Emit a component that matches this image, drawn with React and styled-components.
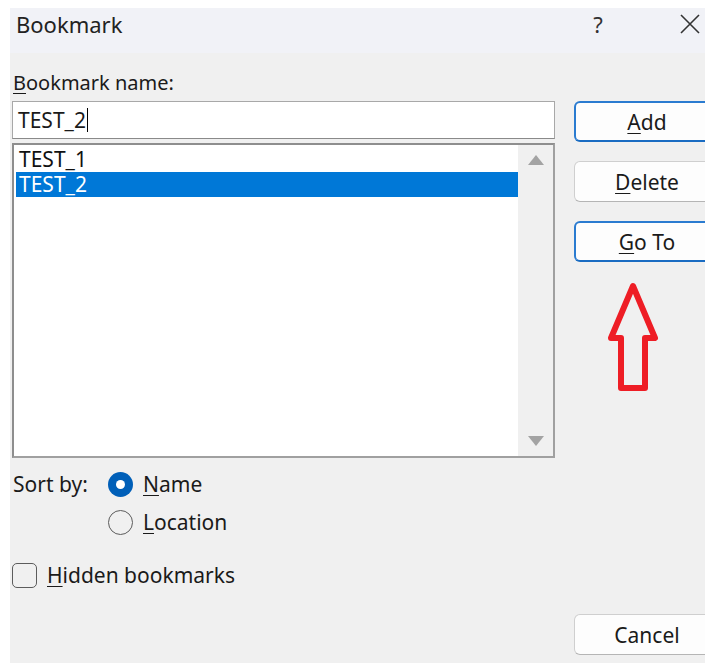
import styled, { createGlobalStyle } from "styled-components";

const GlobalStyle = createGlobalStyle`
  html, body {
    margin: 0;
    padding: 0;
    background: #ffffff;
    overflow: hidden;
  }
  body {
    font-family: "Noto Sans", "Open Sans", sans-serif;
    color: #1a1a1a;
  }
`;

const Dialog = styled.div`
  margin: 8px 0 0 10px;
  width: 695px;
  height: 655px;
  background: #f0f0f0;
  overflow: hidden;
  display: flex;
  flex-direction: column;
`;

const TitleBar = styled.div`
  height: 45px;
  flex-shrink: 0;
  background: #f1f2f7;
  display: flex;
  align-items: center;
  padding-left: 6px;
  font-size: 22px;
  color: #222;
`;

const Title = styled.div`
  flex: 1;
  margin-top: -14px;
`;

const TitleButton = styled.div`
  width: 24px;
  display: flex;
  justify-content: center;
  margin: -14px ${(p) => p.mr}px 0 0;
  color: #333;
  font-size: 22px;
`;

const Body = styled.div`
  flex: 1;
  display: flex;
  gap: 19px;
  padding: 0 0 0 2px;
`;

const LeftColumn = styled.div`
  width: 543px;
  flex-shrink: 0;
  display: flex;
  flex-direction: column;
`;

const RightColumn = styled.div`
  width: 146px;
  flex-shrink: 0;
  display: flex;
  flex-direction: column;
  padding: 48px 0 8px;
`;

const Label = styled.div`
  font-size: 20px;
  line-height: 24px;
  padding: 18px 0 0 1px;
  height: 48px;
  box-sizing: border-box;
`;

const Key = styled.span`
  text-decoration: underline;
  text-underline-offset: 3px;
  text-decoration-thickness: 1px;
`;

const NameInput = styled.div`
  height: 38px;
  box-sizing: border-box;
  background: #fff;
  border: 1px solid #a8a8a8;
  border-bottom-color: #8a8a8a;
  display: flex;
  align-items: center;
  padding-left: 5px;
  font-size: 21px;
`;

const Caret = styled.span`
  display: inline-block;
  width: 1px;
  height: 24px;
  background: #000;
  margin-left: 1px;
`;

const List = styled.div`
  margin-top: 4px;
  height: 315px;
  box-sizing: border-box;
  background: #fff;
  border: 2px solid #8e8e8e;
  border-right-color: #a0a0a0;
  border-bottom-color: #a0a0a0;
  display: flex;
`;

const Items = styled.div`
  flex: 1;
  padding: 2px 0 0 2px;
`;

const Item = styled.div`
  height: 25px;
  display: flex;
  align-items: center;
  padding-left: 3px;
  font-size: 21px;
  line-height: 25px;
  background: ${(p) => (p.selected ? "#0078d7" : "transparent")};
  color: ${(p) => (p.selected ? "#ffffff" : "#111")};
`;

const ScrollBar = styled.div`
  width: 35px;
  background: #f0f0f0;
  display: flex;
  flex-direction: column;
  justify-content: space-between;
  align-items: center;
  padding: 10px 0 10px;
`;

const SortRow = styled.div`
  display: flex;
  margin-top: 12px;
`;

const SortLabel = styled.div`
  width: 95px;
  padding-left: 1px;
  font-size: 21px;
  line-height: 28px;
`;

const RadioGroup = styled.div`
  display: flex;
  flex-direction: column;
  gap: 10px;
`;

const Option = styled.div`
  display: flex;
  align-items: center;
  gap: 10px;
  height: 28px;
  font-size: 21px;
`;

const Radio = styled.span`
  width: 25px;
  height: 25px;
  border-radius: 50%;
  box-sizing: border-box;
  display: flex;
  align-items: center;
  justify-content: center;
  background: ${(p) => (p.checked ? "#005fb8" : "transparent")};
  border: ${(p) => (p.checked ? "none" : "1.5px solid #5c5c5c")};

  &::after {
    content: "";
    display: ${(p) => (p.checked ? "block" : "none")};
    width: 9px;
    height: 9px;
    border-radius: 50%;
    background: #fff;
  }
`;

const CheckRow = styled.div`
  display: flex;
  align-items: center;
  gap: 10px;
  margin-top: 25px;
  font-size: 21px;
`;

const CheckBox = styled.span`
  width: 25px;
  height: 25px;
  box-sizing: border-box;
  border: 1.5px solid #5c5c5c;
  border-radius: 5px;
`;

const Button = styled.div`
  height: 41px;
  flex-shrink: 0;
  box-sizing: border-box;
  border-radius: 6px;
  background: #fdfdfd;
  border: ${(p) => (p.primary ? "2px solid #2a7bd0" : "1px solid #cfcfcf")};
  border-bottom-color: ${(p) => (p.primary ? "#1a6cc2" : "#b5b5b5")};
  display: flex;
  align-items: center;
  justify-content: center;
  font-size: 21px;
  margin-bottom: ${(p) => (p.last ? 0 : 19)}px;
`;

const Spacer = styled.div`
  flex: 1;
`;

const ArrowWrap = styled.div`
  display: flex;
  justify-content: center;
  padding: 1px 28px 0 0;
`;

const UpTriangle = () => (
  <svg width="16" height="10" viewBox="0 0 16 10">
    <path d="M8 0 L16 10 L0 10 Z" fill="#a3a3a3" />
  </svg>
);

const DownTriangle = () => (
  <svg width="16" height="10" viewBox="0 0 16 10">
    <path d="M0 0 L16 0 L8 10 Z" fill="#a3a3a3" />
  </svg>
);

const CloseIcon = () => (
  <svg width="20" height="20" viewBox="0 0 20 20">
    <path d="M1 1 L19 19 M19 1 L1 19" stroke="#333" strokeWidth="1.6" />
  </svg>
);

const HollowArrow = () => (
  <svg width="54" height="112" viewBox="0 0 54 112">
    <path
      d="M27 4 L49 56 L39 56 L39 106 L15 106 L15 56 L5 56 Z"
      fill="none"
      stroke="#ee1d25"
      strokeWidth="6"
      strokeLinejoin="round"
    />
  </svg>
);

export default function App() {
  return (
    <>
      <GlobalStyle />
      <Dialog>
        <TitleBar>
          <Title>Bookmark</Title>
          <TitleButton mr={68}>?</TitleButton>
          <TitleButton mr={3}>
            <CloseIcon />
          </TitleButton>
        </TitleBar>
        <Body>
          <LeftColumn>
            <Label>
              <Key>B</Key>ookmark name:
            </Label>
            <NameInput>
              TEST_2
              <Caret />
            </NameInput>
            <List>
              <Items>
                <Item>TEST_1</Item>
                <Item selected>TEST_2</Item>
              </Items>
              <ScrollBar>
                <UpTriangle />
                <DownTriangle />
              </ScrollBar>
            </List>
            <SortRow>
              <SortLabel>Sort by:</SortLabel>
              <RadioGroup>
                <Option>
                  <Radio checked />
                  <span>
                    <Key>N</Key>ame
                  </span>
                </Option>
                <Option>
                  <Radio />
                  <span>
                    <Key>L</Key>ocation
                  </span>
                </Option>
              </RadioGroup>
            </SortRow>
            <CheckRow>
              <CheckBox />
              <span>
                <Key>H</Key>idden bookmarks
              </span>
            </CheckRow>
          </LeftColumn>
          <RightColumn>
            <Button primary>
              <span>
                <Key>A</Key>dd
              </span>
            </Button>
            <Button>
              <span>
                <Key>D</Key>elete
              </span>
            </Button>
            <Button primary>
              <span>
                <Key>G</Key>o To
              </span>
            </Button>
            <ArrowWrap>
              <HollowArrow />
            </ArrowWrap>
            <Spacer />
            <Button last>Cancel</Button>
          </RightColumn>
        </Body>
      </Dialog>
    </>
  );
}
